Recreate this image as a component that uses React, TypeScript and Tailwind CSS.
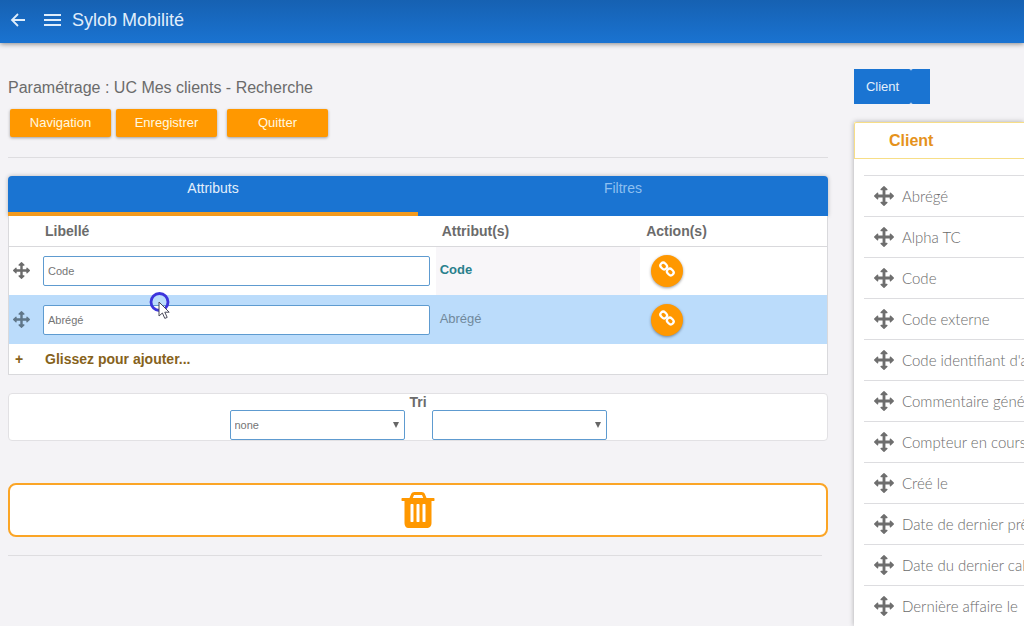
import React, { useState } from 'react';

const ATTRIBUTES = [
  'Abrégé',
  'Alpha TC',
  'Code',
  'Code externe',
  "Code identifiant d'article",
  'Commentaire général',
  'Compteur en cours',
  'Créé le',
  'Date de dernier prêt',
  'Date du dernier calcul',
  'Dernière affaire le',
];

interface IconProps {
  className?: string;
}

function MoveIcon({ className }: IconProps) {
  return (
    <svg viewBox="0 0 1792 1792" fill="currentColor" className={className} aria-hidden="true">
      <path d="M1792 896q0 26-19 45l-256 256q-19 19-45 19t-45-19-19-45v-128h-384v384h128q26 0 45 19t19 45-19 45l-256 256q-19 19-45 19t-45-19l-256-256q-19-19-19-45t19-45 45-19h128v-384h-384v128q0 26-19 45t-45 19-45-19l-256-256q-19-19-19-45t19-45l256-256q19-19 45-19t45 19 19 45v128h384v-384h-128q-26 0-45-19t-19-45 19-45l256-256q19-19 45-19t45 19l256 256q19 19 19 45t-19 45-45 19h-128v384h384v-128q0-26 19-45t45-19 45 19l256 256q19 19 19 45z" />
    </svg>
  );
}

function LinkIcon({ className }: IconProps) {
  return (
    <svg
      viewBox="0 0 16 16"
      fill="none"
      stroke="currentColor"
      strokeWidth="2.3"
      className={className}
      aria-hidden="true"
    >
      <rect x="-3.5" y="-2.8" width="7" height="5.6" rx="2.8" transform="translate(4.7 5) rotate(45)" />
      <rect x="-3.5" y="-2.8" width="7" height="5.6" rx="2.8" transform="translate(11.3 11) rotate(45)" />
    </svg>
  );
}

function TrashIcon({ className }: IconProps) {
  return (
    <svg viewBox="0 0 1792 1792" fill="currentColor" className={className} aria-hidden="true">
      <path d="M704 1376v-704q0-14-9-23t-23-9h-64q-14 0-23 9t-9 23v704q0 14 9 23t23 9h64q14 0 23-9t9-23zm256 0v-704q0-14-9-23t-23-9h-64q-14 0-23 9t-9 23v704q0 14 9 23t23 9h64q14 0 23-9t9-23zm256 0v-704q0-14-9-23t-23-9h-64q-14 0-23 9t-9 23v704q0 14 9 23t23 9h64q14 0 23-9t9-23zm-544-992h448l-48-117q-7-9-17-11h-317q-10 2-17 11zm928 32v64q0 14-9 23t-23 9h-96v948q0 83-47 143.5t-113 60.5h-832q-66 0-113-58.5t-47-141.5v-952h-96q-14 0-23-9t-9-23v-64q0-14 9-23t23-9h309l70-167q15-37 54-63t79-26h320q40 0 79 26t54 63l70 167h309q14 0 23 9t9 23z" />
    </svg>
  );
}

function ActionButton({ label }: { label: string }) {
  return (
    <button className="h-7 w-[101px] rounded-xs bg-[#ff9800] text-[13px] text-[#fff8e0] shadow-[0_1px_3px_rgba(0,0,0,0.35)]">
      {label}
    </button>
  );
}

interface TabProps {
  label: string;
  isActive: boolean;
  onClick: () => void;
}

function Tab({ label, isActive, onClick }: TabProps) {
  return (
    <button
      role="tab"
      aria-selected={isActive}
      onClick={onClick}
      className={`flex h-10 flex-1 justify-center border-b-4 pt-0.5 text-sm ${
        isActive ? 'border-[#f39a1d] text-[#e3effb]' : 'border-transparent text-[#8fc0f0]'
      }`}
    >
      {label}
    </button>
  );
}

interface RowProps {
  name: string;
  isSelected?: boolean;
}

function AttributeRow({ name, isSelected }: RowProps) {
  return (
    <tr className={`h-[49px] ${isSelected ? 'bg-[#bbdcfb]' : 'bg-white'}`}>
      <td className="pl-1">
        <MoveIcon className={`size-[17px] ${isSelected ? 'text-[#5f7688]' : 'text-[#6b6b6b]'}`} />
      </td>
      <td className="pr-1.5">
        <input
          type="text"
          aria-label={`Libellé ${name}`}
          defaultValue={name}
          className="block h-[30px] w-full rounded-xs border border-[#5e9bd0] bg-white px-1 text-[11px] text-[#757575] outline-none"
        />
      </td>
      <td
        className={`pl-1 text-[13px] ${
          isSelected ? 'text-[#71899c]' : 'bg-[#f8f6f9] font-bold text-[#2a808c]'
        }`}
      >
        {name}
      </td>
      <td className="pl-[11px]">
        <button
          aria-label={`Lier ${name}`}
          className="flex size-8 items-center justify-center rounded-full bg-[#ff9800] pb-1 text-white shadow-[0_1px_3px_rgba(0,0,0,0.4)]"
        >
          <LinkIcon className="size-4" />
        </button>
      </td>
    </tr>
  );
}

function SortSelect({ label, options }: { label: string; options: string[] }) {
  return (
    <div className="relative w-[175px]">
      <select
        aria-label={label}
        className="block h-[30px] w-full appearance-none rounded-xs border border-[#5e9bd0] bg-white px-1 text-[11px] text-[#757575] outline-none"
      >
        {options.map((option) => (
          <option key={option}>{option}</option>
        ))}
      </select>
      <svg
        viewBox="0 0 6 6"
        className="pointer-events-none absolute top-3 right-1.5 size-1.5 fill-[#666]"
        aria-hidden="true"
      >
        <path d="M0 0h6L3 6z" />
      </svg>
    </div>
  );
}

export default function App() {
  const [activeTab, setActiveTab] = useState<'attributs' | 'filtres'>('attributs');

  return (
    <div className="flex h-screen flex-col overflow-hidden bg-[#f4f3f6] font-['Liberation_Sans',Arial,sans-serif] text-[#6b6b6b]">
      <header className="z-10 flex h-[43px] shrink-0 items-center bg-linear-to-b from-[#1661b2] to-[#1a73d1] pb-1 pl-2.5 text-[#e0eefb] shadow-[0_1px_5px_rgba(0,0,0,0.45)]">
        <button aria-label="Retour">
          <svg viewBox="0 0 16 16" className="size-4" fill="none" stroke="currentColor" strokeWidth="1.8">
            <path d="M15 8H2.5M8 2L2 8l6 6" />
          </svg>
        </button>
        <button aria-label="Menu" className="ml-[18px]">
          <svg viewBox="0 0 17 12" className="h-3 w-[17px]" fill="none" stroke="currentColor" strokeWidth="2">
            <path d="M0 1h17M0 6h17M0 11h17" />
          </svg>
        </button>
        <h1 className="ml-[11px] text-lg">Sylob Mobilité</h1>
      </header>

      <main className="relative grid min-h-0 flex-1 grid-cols-[minmax(0,1fr)_170px] gap-[26px] pl-2">
        <section className="pt-[33px]">
          <h2 className="text-base">Paramétrage : UC Mes clients - Recherche</h2>
          <div className="mt-[9px] ml-0.5 flex gap-2.5">
            <div className="flex gap-[5px]">
              <ActionButton label="Navigation" />
              <ActionButton label="Enregistrer" />
            </div>
            <ActionButton label="Quitter" />
          </div>
          <hr className="mt-5 border-[#dedde0]" />

          {/* Attributs / Filtres */}
          <div
            role="tablist"
            className="mt-[18px] flex overflow-hidden rounded-t bg-[#1a74d2] shadow-[0_0_4px_rgba(0,0,0,0.25)]"
          >
            <Tab label="Attributs" isActive={activeTab === 'attributs'} onClick={() => setActiveTab('attributs')} />
            <Tab label="Filtres" isActive={activeTab === 'filtres'} onClick={() => setActiveTab('filtres')} />
          </div>
          <div className="border border-t-0 border-[#d9d9dc] bg-white">
            <table className="w-full table-fixed text-left text-sm">
              <colgroup>
                <col className="w-[34px]" />
                <col className="w-[48%]" />
                <col className="w-[25%]" />
                <col />
              </colgroup>
              <thead>
                <tr className="h-[30px] border-b border-[#d9d9dc]">
                  <th aria-label="Déplacer" />
                  <th className="pl-0.5">Libellé</th>
                  <th className="pl-1.5">Attribut(s)</th>
                  <th className="pl-1.5">Action(s)</th>
                </tr>
              </thead>
              <tbody>
                <AttributeRow name="Code" />
                <AttributeRow name="Abrégé" isSelected />
                <tr className="h-[30px] font-bold text-[#86621b]">
                  <td className="pl-1.5">+</td>
                  <td colSpan={3} className="pl-0.5">
                    Glissez pour ajouter...
                  </td>
                </tr>
              </tbody>
            </table>
          </div>

          {/* Tri */}
          <div className="mt-[18px] rounded border border-[#e2e1e4] bg-white">
            <h3 className="text-center text-sm leading-4 font-bold">Tri</h3>
            <div className="flex justify-center gap-[27px]">
              <SortSelect label="Tri par" options={['none', 'Code', 'Abrégé']} />
              <SortSelect label="Ordre de tri" options={['', 'Croissant', 'Décroissant']} />
            </div>
          </div>

          <div className="mt-[42px] flex h-[54px] items-center justify-center rounded-lg border-2 border-[#fba526] bg-white">
            <TrashIcon className="size-[42px] text-[#ff9800]" />
          </div>
          <hr className="mt-[18px] mr-1.5 border-[#dedde0]" />
        </section>

        <aside className="flex flex-col pt-[26px]">
          <div className="flex h-[35px] text-[13px] text-[#e3effb]">
            <button className="w-[57px] rounded-r-xs bg-[#1a74d2]">Client</button>
            <button aria-label="Ajouter un niveau" className="w-[19px] rounded-l-xs bg-[#1a74d2]" />
          </div>
          <div className="mt-[18px] flex-1 bg-white shadow-[0_0_5px_rgba(0,0,0,0.3)]">
            <h3 className="h-[37px] rounded-tl-xs border border-r-0 border-[#f7de87] pl-[34px] text-base leading-[35px] font-bold text-[#e5921c]">
              Client
            </h3>
            <ul className="mt-4 ml-2.5 font-[Lato,Carlito,sans-serif] text-[15px] font-light">
              {ATTRIBUTES.map((attribute) => (
                <li
                  key={attribute}
                  className="flex h-[41px] items-center gap-2 border-t border-[#dddde0] pl-2.5 whitespace-nowrap"
                >
                  <MoveIcon className="size-5 shrink-0 text-[#6e6e6e]" />
                  {attribute}
                </li>
              ))}
            </ul>
          </div>
        </aside>

        {/* Click marker and mouse pointer */}
        <svg
          viewBox="0 0 24 30"
          className="pointer-events-none absolute top-[248px] left-[148px] h-[30px] w-6"
          aria-hidden="true"
        >
          <circle cx="11.5" cy="11" r="8.5" fill="none" stroke="#3d35dc" strokeWidth="2.8" />
          <path
            d="M11 11v14l3.4-3 2.4 5.4 2.4-1-2.4-5.2h4.4z"
            fill="#fff"
            stroke="#4a4a5a"
            strokeWidth="1"
          />
        </svg>
      </main>
    </div>
  );
}
